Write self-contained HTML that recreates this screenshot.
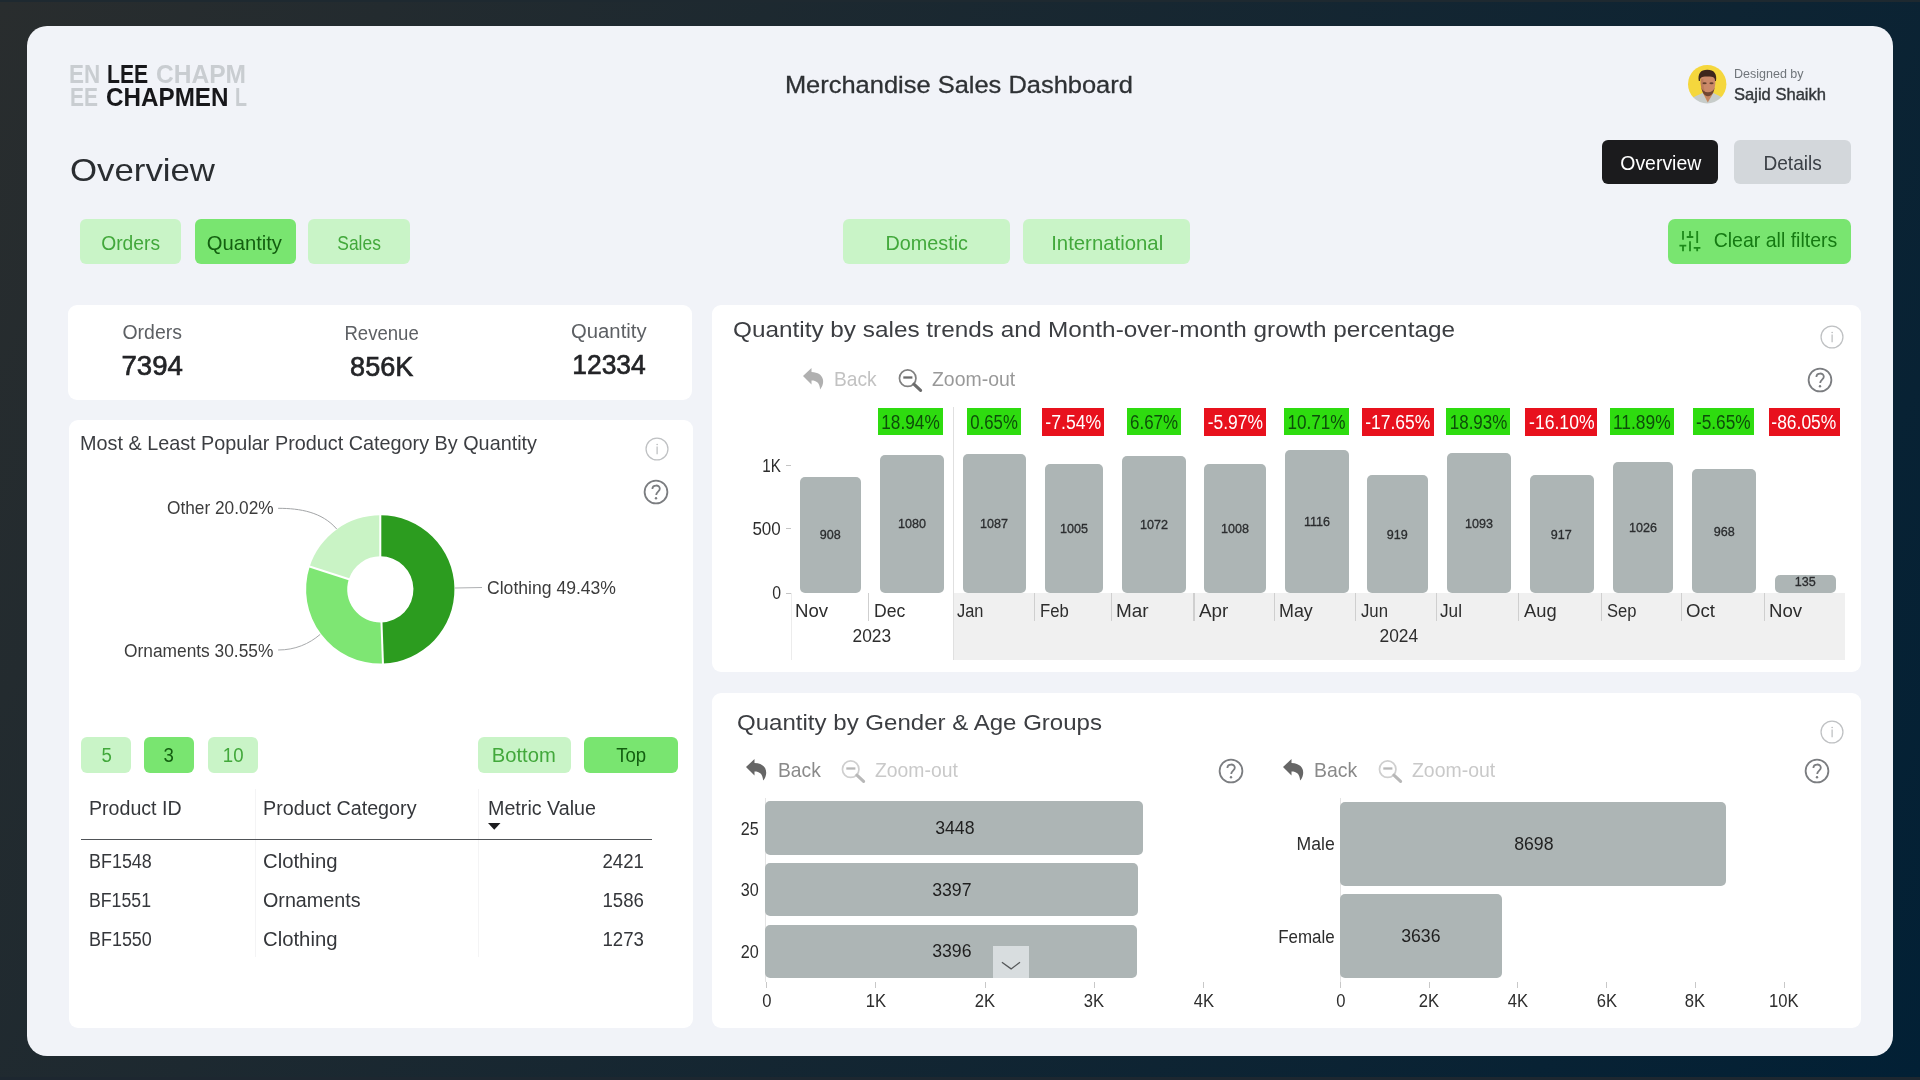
<!DOCTYPE html>
<html lang="en">
<head>
<meta charset="utf-8">
<title>Merchandise Sales Dashboard</title>
<style>
html,body{margin:0;padding:0;}
body{width:1920px;height:1080px;overflow:hidden;position:relative;font-family:"Liberation Sans",sans-serif;
  background:linear-gradient(118.9deg,rgb(41,45,46) 0%,rgb(2,32,53) 100%);}
.a{position:absolute;}
.t{position:absolute;white-space:pre;line-height:1;font-family:"Liberation Sans",sans-serif;}
#panel{left:27px;top:25.5px;width:1866px;height:1030.1px;border-radius:20px;background:#f1f3f8;}
.card{background:#fff;border-radius:9px;}
.chip{border-radius:6px;background:#c9f4c7;}
.chip.on{background:#79e570;}
.bar{background:#adb5b5;border-radius:5px;}
.pg{background:#2edc0f;}
.pr{background:#e8111d;}
.sep{background:#d2d2d2;width:1px;}
svg{position:absolute;overflow:visible;}
</style>
</head>
<body>
<div class="a" style="left:0;top:0;width:1920px;height:2.4px;background:#1e2930;"></div>
<div class="a" style="left:0;top:1077.2px;width:1920px;height:2.8px;background:#1d2730;"></div>
<div id="panel" class="a"></div>

<!-- header buttons -->
<div class="a" style="left:1602px;top:139.5px;width:116px;height:44.5px;border-radius:6px;background:#1b1b1d;"></div>
<div class="a" style="left:1734.3px;top:139.5px;width:116.5px;height:44.5px;border-radius:6px;background:#d3d7db;"></div>

<!-- avatar -->
<svg style="left:1687.8px;top:65.3px;" width="38.4" height="38.4" viewBox="0 0 38.4 38.4">
  <defs><clipPath id="av"><circle cx="19.2" cy="19.2" r="19.2"/></clipPath>
  <filter id="avb" x="-10%" y="-10%" width="120%" height="120%"><feGaussianBlur stdDeviation="0.65"/></filter></defs>
  <g clip-path="url(#av)"><g filter="url(#avb)">
    <rect x="-3" y="-3" width="45" height="45" fill="#f5d73e"/>
    <path d="M0 35 C6 31.5 11.5 29.8 15 27.8 L19.6 36.8 L25 27.8 C28.5 29.8 33 31.5 39 35 V42 H0 Z" fill="#c7ccca"/>
    <path d="M15 24 V28 L19.8 37.6 L25.2 28 V24 Z" fill="#c58562"/>
    <path d="M12.6 11 C12.4 20 13 24 15.5 28 C17.5 31.3 22.5 31.3 24.5 28 C27 24 27.6 20 27.4 11 Z" fill="#cb8969"/>
    <path d="M12.6 14 C12.4 20 13 24 15.5 28 C16.3 29.4 17.6 30.3 19 30.6 C16 27 15.2 20 15.4 14 Z" fill="#b3714f" opacity=".55"/>
    <path d="M13.4 22.5 C14 27.6 16.5 31.2 20 31.2 C23.5 31.2 26 27.6 26.6 22.5 C25.6 25.8 23.4 27.2 20 27.2 C16.6 27.2 14.4 25.8 13.4 22.5 Z" fill="#5a3627" opacity=".8"/>
    <path d="M10.8 16 C9.6 8.6 12.5 4.7 19.3 4.7 C26 4.7 29.2 8.6 28 16 L27 16 C27.2 12.8 25.5 11.4 19.4 11.5 C13.5 11.4 11.8 12.8 12 16 Z" fill="#3d261b"/>
    <ellipse cx="16.6" cy="18.2" rx="2.1" ry="1" fill="#42271b" opacity=".75"/>
    <ellipse cx="23.5" cy="18.2" rx="2.1" ry="1" fill="#42271b" opacity=".75"/>
  </g></g>
</svg>

<!-- filter chips -->
<div class="a chip" style="left:80px;top:219px;width:101px;height:45px;"></div>
<div class="a chip on" style="left:195px;top:219px;width:101px;height:45px;"></div>
<div class="a chip" style="left:308px;top:219px;width:102px;height:45px;"></div>
<div class="a chip" style="left:843px;top:219px;width:167px;height:45px;"></div>
<div class="a chip" style="left:1023px;top:219px;width:167px;height:45px;"></div>
<div class="a chip on" style="left:1668px;top:219px;width:183px;height:45px;border-radius:7px;"></div>
<!-- sliders icon -->
<svg style="left:1679px;top:230px;" width="23" height="23" viewBox="0 0 23 23" fill="none" stroke="#1d8a1a" stroke-width="1.8">
  <path d="M4 1 V9.8 M4 15.7 V21.3 M0.4 15.7 H7.3"/>
  <path d="M11 1 V7 M7.7 7 H14.3 M11 11.3 V21.3"/>
  <path d="M18.2 1 V13.1 M14.7 17.9 H21.4 M18.2 17.9 V21.3"/>
</svg>

<!-- cards -->
<div class="a card" style="left:68.3px;top:305px;width:623.7px;height:95px;"></div>
<div class="a card" style="left:69.3px;top:420.4px;width:623.7px;height:607.2px;"></div>
<div class="a card" style="left:712.3px;top:305px;width:1148.5px;height:367.3px;"></div>
<div class="a card" style="left:712.3px;top:693.3px;width:1148.5px;height:334.3px;"></div>

<svg style="left:0;top:0;" width="1920" height="1080"><path d="M380.30 515.20 A74.2 74.2 0 0 1 382.96 663.55 L381.49 622.48 A33.1 33.1 0 0 0 380.30 556.30 Z" fill="#2c9c1f"/><path d="M382.96 663.55 A74.2 74.2 0 0 1 309.70 566.56 L348.81 579.21 A33.1 33.1 0 0 0 381.49 622.48 Z" fill="#7ee673"/><path d="M309.70 566.56 A74.2 74.2 0 0 1 380.30 515.20 L380.30 556.30 A33.1 33.1 0 0 0 348.81 579.21 Z" fill="#c9f3c5"/><path d="M380.30 557.30 L380.30 514.20" stroke="#fff" stroke-width="2"/><path d="M381.45 621.48 L382.99 664.55" stroke="#fff" stroke-width="2"/><path d="M349.76 579.52 L308.75 566.25" stroke="#fff" stroke-width="2"/><path d="M278.1 508.3 C300 508.3 322 512 336.7 529" fill="none" stroke="#a2a4a6" stroke-width="1"/><path d="M455 588 L482 587.5" fill="none" stroke="#aeb0b2" stroke-width="1"/><path d="M278.1 650 C295 650 309 644 320.2 634.4" fill="none" stroke="#a8aaac" stroke-width="1"/></svg>
<div class="a chip" style="left:81.0px;top:737.0px;width:50.4px;height:36.0px;"></div>
<div class="a chip on" style="left:143.8px;top:737.0px;width:50.4px;height:36.0px;"></div>
<div class="a chip" style="left:208.0px;top:737.0px;width:50.2px;height:36.0px;"></div>
<div class="a chip" style="left:477.5px;top:737.0px;width:93.3px;height:36.0px;"></div>
<div class="a chip on" style="left:584.2px;top:737.0px;width:93.4px;height:36.0px;"></div>
<svg style="left:487.5px;top:822.5px;" width="13" height="7"><path d="M0 0 H12.5 L6.25 6.7 Z" fill="#1d1d1f"/></svg>
<div class="a " style="left:255.0px;top:789.0px;width:1.0px;height:168.0px;background:#f4f4f5;"></div>
<div class="a " style="left:478.0px;top:789.0px;width:1.0px;height:168.0px;background:#f4f4f5;"></div>
<div class="a " style="left:81.2px;top:838.5px;width:571.3px;height:1.6px;background:#505357;"></div>
<div class="a " style="left:786.3px;top:464.9px;width:4.7px;height:1.0px;background:#c4c4c4;"></div>
<div class="a " style="left:786.3px;top:528.2px;width:4.7px;height:1.0px;background:#c4c4c4;"></div>
<div class="a " style="left:786.3px;top:592.5px;width:4.7px;height:1.0px;background:#c4c4c4;"></div>
<div class="a " style="left:953.3px;top:592.7px;width:891.3px;height:67.3px;background:#f0f0f0;"></div>
<div class="a " style="left:791.2px;top:593.0px;width:1.0px;height:67.0px;background:#ececec;"></div>
<div class="a " style="left:953.0px;top:407.0px;width:1.0px;height:253.0px;background:#e0e0e0;"></div>
<div class="a bar" style="left:800.2px;top:476.6px;width:61.0px;height:116.1px;"></div>
<div class="a bar" style="left:880.0px;top:454.6px;width:63.8px;height:138.1px;"></div>
<div class="a pg" style="left:878.4px;top:407.6px;width:65.0px;height:27.6px;"></div>
<div class="a bar" style="left:962.6px;top:453.7px;width:63.8px;height:139.0px;"></div>
<div class="a pg" style="left:967.0px;top:407.6px;width:54.0px;height:27.6px;"></div>
<div class="a bar" style="left:1044.9px;top:464.2px;width:58.4px;height:128.5px;"></div>
<div class="a pr" style="left:1041.9px;top:407.6px;width:62.4px;height:28.0px;"></div>
<div class="a bar" style="left:1122.1px;top:455.6px;width:64.0px;height:137.1px;"></div>
<div class="a pg" style="left:1126.5px;top:407.6px;width:54.5px;height:27.6px;"></div>
<div class="a bar" style="left:1204.4px;top:463.8px;width:61.8px;height:128.9px;"></div>
<div class="a pr" style="left:1204.4px;top:407.6px;width:61.8px;height:28.0px;"></div>
<div class="a bar" style="left:1284.6px;top:450.0px;width:64.0px;height:142.7px;"></div>
<div class="a pg" style="left:1284.0px;top:407.6px;width:64.6px;height:27.6px;"></div>
<div class="a bar" style="left:1366.8px;top:475.2px;width:61.5px;height:117.5px;"></div>
<div class="a pr" style="left:1361.9px;top:407.6px;width:71.7px;height:28.0px;"></div>
<div class="a bar" style="left:1447.1px;top:452.9px;width:64.0px;height:139.8px;"></div>
<div class="a pg" style="left:1446.1px;top:407.6px;width:64.0px;height:27.6px;"></div>
<div class="a bar" style="left:1529.7px;top:475.4px;width:64.0px;height:117.3px;"></div>
<div class="a pr" style="left:1525.4px;top:407.6px;width:71.9px;height:28.0px;"></div>
<div class="a bar" style="left:1612.5px;top:461.5px;width:60.8px;height:131.2px;"></div>
<div class="a pg" style="left:1610.0px;top:407.6px;width:64.3px;height:27.6px;"></div>
<div class="a bar" style="left:1692.3px;top:468.9px;width:63.6px;height:123.8px;"></div>
<div class="a pg" style="left:1693.0px;top:407.6px;width:61.3px;height:27.6px;"></div>
<div class="a bar" style="left:1774.7px;top:575.4px;width:61.2px;height:17.3px;"></div>
<div class="a pr" style="left:1768.5px;top:407.6px;width:71.4px;height:28.0px;"></div>
<div class="a " style="left:868.3px;top:593.0px;width:1.2px;height:28.0px;background:#cfcfcf;"></div>
<div class="a " style="left:1033.8px;top:593.0px;width:1.2px;height:28.0px;background:#cfcfcf;"></div>
<div class="a " style="left:1111.2px;top:593.0px;width:1.2px;height:28.0px;background:#cfcfcf;"></div>
<div class="a " style="left:1193.4px;top:593.0px;width:1.2px;height:28.0px;background:#cfcfcf;"></div>
<div class="a " style="left:1273.5px;top:593.0px;width:1.2px;height:28.0px;background:#cfcfcf;"></div>
<div class="a " style="left:1355.3px;top:593.0px;width:1.2px;height:28.0px;background:#cfcfcf;"></div>
<div class="a " style="left:1436.3px;top:593.0px;width:1.2px;height:28.0px;background:#cfcfcf;"></div>
<div class="a " style="left:1517.9px;top:593.0px;width:1.2px;height:28.0px;background:#cfcfcf;"></div>
<div class="a " style="left:1600.9px;top:593.0px;width:1.2px;height:28.0px;background:#cfcfcf;"></div>
<div class="a " style="left:1680.6px;top:593.0px;width:1.2px;height:28.0px;background:#cfcfcf;"></div>
<div class="a " style="left:1763.9px;top:593.0px;width:1.2px;height:28.0px;background:#cfcfcf;"></div>
<div class="a " style="left:765.0px;top:798.0px;width:1.0px;height:184.0px;background:#e4e4e4;"></div>
<div class="a bar" style="left:765.3px;top:801.2px;width:377.9px;height:53.8px;"></div>
<div class="a bar" style="left:765.3px;top:863.2px;width:372.3px;height:53.2px;"></div>
<div class="a bar" style="left:765.3px;top:924.8px;width:372.2px;height:53.2px;"></div>
<div class="a " style="left:766.0px;top:982.0px;width:1.0px;height:5.5px;background:#c8c8c8;"></div>
<div class="a " style="left:875.3px;top:982.0px;width:1.0px;height:5.5px;background:#c8c8c8;"></div>
<div class="a " style="left:984.6px;top:982.0px;width:1.0px;height:5.5px;background:#c8c8c8;"></div>
<div class="a " style="left:1093.9px;top:982.0px;width:1.0px;height:5.5px;background:#c8c8c8;"></div>
<div class="a " style="left:1203.2px;top:982.0px;width:1.0px;height:5.5px;background:#c8c8c8;"></div>
<div class="a " style="left:993.0px;top:945.8px;width:36.0px;height:32.1px;background:#d8dddf;"></div>
<svg style="left:1001px;top:961px;" width="20" height="9"><path d="M0.9 1.2 L10.1 7.9 L19 1.2" fill="none" stroke="#55585a" stroke-width="1.3"/></svg>
<div class="a " style="left:1339.7px;top:798.0px;width:1.0px;height:184.0px;background:#e4e4e4;"></div>
<div class="a bar" style="left:1340px;top:801.5px;width:386.3px;height:84.1px;"></div>
<div class="a bar" style="left:1340px;top:894px;width:161.8px;height:84.1px;"></div>
<div class="a " style="left:1340.0px;top:982.0px;width:1.0px;height:5.5px;background:#c8c8c8;"></div>
<div class="a " style="left:1428.7px;top:982.0px;width:1.0px;height:5.5px;background:#c8c8c8;"></div>
<div class="a " style="left:1517.4px;top:982.0px;width:1.0px;height:5.5px;background:#c8c8c8;"></div>
<div class="a " style="left:1606.1px;top:982.0px;width:1.0px;height:5.5px;background:#c8c8c8;"></div>
<div class="a " style="left:1694.8px;top:982.0px;width:1.0px;height:5.5px;background:#c8c8c8;"></div>
<div class="a " style="left:1783.5px;top:982.0px;width:1.0px;height:5.5px;background:#c8c8c8;"></div>
<svg style="left:643.6px;top:435.7px;" width="26" height="26" viewBox="-13 -13 26 26"><circle r="10.95" fill="none" stroke="#bfc1c3" stroke-width="1.25"/><path d="M0.1 -2.4 V5.3" stroke="#b4b6b8" stroke-width="1.1"/><circle cx="0.1" cy="-4.6" r=".75" fill="#b4b6b8"/></svg>
<svg style="left:642.6px;top:478.9px;" width="26" height="26" viewBox="-13 -13 26 26"><circle r="11.4" fill="none" stroke="#7b7d80" stroke-width="1.8"/><path d="M-3.6 -3 C-3.6 -7.6 3.8 -7.6 3.8 -3.2 C3.8 -0.4 0.2 -0.3 0.2 3" fill="none" stroke="#7b7d80" stroke-width="1.8"/><circle cy="6.2" r="1.2" fill="#7b7d80"/></svg>
<svg style="left:1819.2px;top:324px;" width="26" height="26" viewBox="-13 -13 26 26"><circle r="10.95" fill="none" stroke="#bfc1c3" stroke-width="1.25"/><path d="M0.1 -2.4 V5.3" stroke="#b4b6b8" stroke-width="1.1"/><circle cx="0.1" cy="-4.6" r=".75" fill="#b4b6b8"/></svg>
<svg style="left:1807.3px;top:367.2px;" width="26" height="26" viewBox="-13 -13 26 26"><circle r="11.4" fill="none" stroke="#7b7d80" stroke-width="1.8"/><path d="M-3.6 -3 C-3.6 -7.6 3.8 -7.6 3.8 -3.2 C3.8 -0.4 0.2 -0.3 0.2 3" fill="none" stroke="#7b7d80" stroke-width="1.8"/><circle cy="6.2" r="1.2" fill="#7b7d80"/></svg>
<svg style="left:1819.2px;top:718.9px;" width="26" height="26" viewBox="-13 -13 26 26"><circle r="10.95" fill="none" stroke="#bfc1c3" stroke-width="1.25"/><path d="M0.1 -2.4 V5.3" stroke="#b4b6b8" stroke-width="1.1"/><circle cx="0.1" cy="-4.6" r=".75" fill="#b4b6b8"/></svg>
<svg style="left:1217.7px;top:757.7px;" width="26" height="26" viewBox="-13 -13 26 26"><circle r="11.4" fill="none" stroke="#7b7d80" stroke-width="1.8"/><path d="M-3.6 -3 C-3.6 -7.6 3.8 -7.6 3.8 -3.2 C3.8 -0.4 0.2 -0.3 0.2 3" fill="none" stroke="#7b7d80" stroke-width="1.8"/><circle cy="6.2" r="1.2" fill="#7b7d80"/></svg>
<svg style="left:1804px;top:757.7px;" width="26" height="26" viewBox="-13 -13 26 26"><circle r="11.4" fill="none" stroke="#7b7d80" stroke-width="1.8"/><path d="M-3.6 -3 C-3.6 -7.6 3.8 -7.6 3.8 -3.2 C3.8 -0.4 0.2 -0.3 0.2 3" fill="none" stroke="#7b7d80" stroke-width="1.8"/><circle cy="6.2" r="1.2" fill="#7b7d80"/></svg>
<svg style="left:803px;top:368.4px;" width="22" height="23" viewBox="0 0 22 23"><path d="M8.5 0 L0 8.1 L8.5 16.5 V12.5 C13.6 12.5 16.8 15 17.1 21.6 C22.4 15.6 21.8 4.6 8.5 4.1 Z" fill="#b0b0b0"/></svg>
<svg style="left:898px;top:369px;" width="25" height="25" viewBox="0 0 25 25"><circle cx="9.7" cy="9.2" r="8.25" fill="none" stroke="#808080" stroke-width="1.7"/><path d="M5.3 8.5 H14.4" stroke="#6c6c6c" stroke-width="2.3"/><path d="M15.9 15.1 L22.6 21.4" stroke="#6c6c6c" stroke-width="3.1" stroke-linecap="round"/></svg>
<svg style="left:746px;top:758.6px;" width="22" height="23" viewBox="0 0 22 23"><path d="M8.5 0 L0 8.1 L8.5 16.5 V12.5 C13.6 12.5 16.8 15 17.1 21.6 C22.4 15.6 21.8 4.6 8.5 4.1 Z" fill="#666666"/></svg>
<svg style="left:841.2px;top:760px;" width="25" height="25" viewBox="0 0 25 25"><circle cx="9.7" cy="9.2" r="8.25" fill="none" stroke="#cfcfcf" stroke-width="1.7"/><path d="M5.3 8.5 H14.4" stroke="#b8b8b8" stroke-width="2.3"/><path d="M15.9 15.1 L22.6 21.4" stroke="#b8b8b8" stroke-width="3.1" stroke-linecap="round"/></svg>
<svg style="left:1283px;top:758.6px;" width="22" height="23" viewBox="0 0 22 23"><path d="M8.5 0 L0 8.1 L8.5 16.5 V12.5 C13.6 12.5 16.8 15 17.1 21.6 C22.4 15.6 21.8 4.6 8.5 4.1 Z" fill="#666666"/></svg>
<svg style="left:1378px;top:760px;" width="25" height="25" viewBox="0 0 25 25"><circle cx="9.7" cy="9.2" r="8.25" fill="none" stroke="#cfcfcf" stroke-width="1.7"/><path d="M5.3 8.5 H14.4" stroke="#b8b8b8" stroke-width="2.3"/><path d="M15.9 15.1 L22.6 21.4" stroke="#b8b8b8" stroke-width="3.1" stroke-linecap="round"/></svg>

<span class="t" style="left:69.40px;top:63px;font-size:24.85px;color:#c9cdd1;font-weight:700;transform:scaleX(0.9039);transform-origin:left center;">EN</span>
<span class="t" style="left:107.20px;top:63px;font-size:24.85px;color:#17171a;font-weight:700;transform:scaleX(0.8525);transform-origin:left center;">LEE</span>
<span class="t" style="left:155.90px;top:63px;font-size:24.85px;color:#c9cdd1;font-weight:700;transform:scaleX(0.9880);transform-origin:left center;">CHAPM</span>
<span class="t" style="left:70.20px;top:86px;font-size:24.85px;color:#c9cdd1;font-weight:700;transform:scaleX(0.8445);transform-origin:left center;">EE</span>
<span class="t" style="left:105.90px;top:86px;font-size:24.85px;color:#17171a;font-weight:700;transform:scaleX(0.9752);transform-origin:left center;">CHAPMEN</span>
<span class="t" style="left:235.20px;top:86px;font-size:24.85px;color:#c9cdd1;font-weight:700;transform:scaleX(0.7901);transform-origin:left center;">L</span>
<span class="t" style="left:790.09px;top:73px;font-size:24.71px;color:#2e3134;-webkit-text-stroke:0.30px #2e3134;transform:scaleX(1.0302);transform-origin:center center;">Merchandise Sales Dashboard</span>
<span class="t" style="left:1734.40px;top:68px;font-size:12.94px;color:#70757a;transform:scaleX(0.9677);transform-origin:left center;">Designed by</span>
<span class="t" style="left:1734.40px;top:86px;font-size:17.15px;color:#33373b;-webkit-text-stroke:0.41px #33373b;transform:scaleX(0.9654);transform-origin:left center;">Sajid Shaikh</span>
<span class="t" style="left:70.00px;top:156px;font-size:30.96px;color:#2a2d31;transform:scaleX(1.1240);transform-origin:left center;">Overview</span>
<span class="t" style="left:1618.53px;top:153px;font-size:20.06px;color:#ffffff;transform:scaleX(0.9695);transform-origin:center center;">Overview</span>
<span class="t" style="left:1761.86px;top:153px;font-size:20.06px;color:#3b4046;transform:scaleX(0.9530);transform-origin:center center;">Details</span>
<span class="t" style="left:99.96px;top:233px;font-size:20.06px;color:#42a83b;transform:scaleX(0.9595);transform-origin:center center;">Orders</span>
<span class="t" style="left:207.26px;top:233px;font-size:20.06px;color:#135f10;transform:scaleX(1.0084);transform-origin:center center;">Quantity</span>
<span class="t" style="left:333.72px;top:233px;font-size:20.06px;color:#42a83b;transform:scaleX(0.8693);transform-origin:center center;">Sales</span>
<span class="t" style="left:884.93px;top:233px;font-size:20.06px;color:#42a83b;transform:scaleX(0.9875);transform-origin:center center;">Domestic</span>
<span class="t" style="left:1051.53px;top:233px;font-size:20.06px;color:#42a83b;transform:scaleX(1.0150);transform-origin:center center;">International</span>
<span class="t" style="left:1711.90px;top:230px;font-size:20.06px;color:#157a12;transform:scaleX(0.9740);transform-origin:center center;">Clear all filters</span>
<span class="t" style="left:121.99px;top:323px;font-size:19.77px;color:#5d6064;transform:scaleX(0.9847);transform-origin:center center;">Orders</span>
<span class="t" style="left:121.30px;top:352px;font-size:28.05px;color:#232427;-webkit-text-stroke:0.67px #232427;transform:scaleX(0.9839);transform-origin:center center;">7394</span>
<span class="t" style="left:341.84px;top:324px;font-size:19.77px;color:#5d6064;transform:scaleX(0.9390);transform-origin:center center;">Revenue</span>
<span class="t" style="left:348.64px;top:353px;font-size:28.05px;color:#232427;-webkit-text-stroke:0.67px #232427;transform:scaleX(0.9662);transform-origin:center center;">856K</span>
<span class="t" style="left:572.19px;top:322px;font-size:19.77px;color:#5d6064;transform:scaleX(1.0255);transform-origin:center center;">Quantity</span>
<span class="t" style="left:570.00px;top:351px;font-size:28.05px;color:#232427;-webkit-text-stroke:0.67px #232427;transform:scaleX(0.9423);transform-origin:center center;">12334</span>
<span class="t" style="left:80.20px;top:434px;font-size:19.48px;color:#3c3e42;transform:scaleX(1.0176);transform-origin:left center;">Most &amp; Least Popular Product Category By Quantity</span>
<span class="t" style="left:167.20px;top:500px;font-size:17.88px;color:#3c3c3c;transform:scaleX(0.9673);transform-origin:left center;">Other 20.02%</span>
<span class="t" style="left:486.60px;top:580px;font-size:17.88px;color:#3c3c3c;transform:scaleX(0.9843);transform-origin:left center;">Clothing 49.43%</span>
<span class="t" style="left:124.40px;top:643px;font-size:17.88px;color:#3c3c3c;transform:scaleX(0.9709);transform-origin:left center;">Ornaments 30.55%</span>
<span class="t" style="left:100.62px;top:745px;font-size:20.06px;color:#42a83b;transform:scaleX(0.9300);transform-origin:center center;">5</span>
<span class="t" style="left:163.42px;top:745px;font-size:20.06px;color:#135f10;transform:scaleX(0.9300);transform-origin:center center;">3</span>
<span class="t" style="left:221.84px;top:745px;font-size:20.06px;color:#42a83b;transform:scaleX(0.9300);transform-origin:center center;">10</span>
<span class="t" style="left:492.24px;top:745px;font-size:20.06px;color:#42a83b;transform:scaleX(1.0076);transform-origin:center center;">Bottom</span>
<span class="t" style="left:614.64px;top:745px;font-size:20.06px;color:#135f10;transform:scaleX(0.9280);transform-origin:center center;">Top</span>
<span class="t" style="left:89.30px;top:799px;font-size:19.33px;color:#35373b;transform:scaleX(1.0141);transform-origin:left center;">Product ID</span>
<span class="t" style="left:263.10px;top:799px;font-size:19.33px;color:#35373b;transform:scaleX(1.0205);transform-origin:left center;">Product Category</span>
<span class="t" style="left:487.50px;top:799px;font-size:19.33px;color:#35373b;transform:scaleX(1.0190);transform-origin:left center;">Metric Value</span>
<span class="t" style="left:89.30px;top:852px;font-size:19.33px;color:#35373b;transform:scaleX(0.9276);transform-origin:left center;">BF1548</span>
<span class="t" style="left:263.10px;top:852px;font-size:19.33px;color:#35373b;transform:scaleX(1.0505);transform-origin:left center;">Clothing</span>
<span class="t" style="left:600.50px;top:852px;font-size:19.33px;color:#35373b;transform:scaleX(0.9651);transform-origin:right center;">2421</span>
<span class="t" style="left:89.30px;top:891px;font-size:19.33px;color:#35373b;transform:scaleX(0.9158);transform-origin:left center;">BF1551</span>
<span class="t" style="left:263.10px;top:891px;font-size:19.33px;color:#35373b;transform:scaleX(1.0198);transform-origin:left center;">Ornaments</span>
<span class="t" style="left:600.50px;top:891px;font-size:19.33px;color:#35373b;transform:scaleX(0.9651);transform-origin:right center;">1586</span>
<span class="t" style="left:89.30px;top:930px;font-size:19.33px;color:#35373b;transform:scaleX(0.9276);transform-origin:left center;">BF1550</span>
<span class="t" style="left:263.10px;top:930px;font-size:19.33px;color:#35373b;transform:scaleX(1.0505);transform-origin:left center;">Clothing</span>
<span class="t" style="left:600.50px;top:930px;font-size:19.33px;color:#35373b;transform:scaleX(0.9651);transform-origin:right center;">1273</span>
<span class="t" style="left:733.40px;top:318px;font-size:22.67px;color:#3c3e42;transform:scaleX(1.0736);transform-origin:left center;">Quantity by sales trends and Month-over-month growth percentage</span>
<span class="t" style="left:834.40px;top:369px;font-size:20.78px;color:#c2c2c2;transform:scaleX(0.9226);transform-origin:left center;">Back</span>
<span class="t" style="left:931.50px;top:369px;font-size:20.78px;color:#999999;transform:scaleX(0.9361);transform-origin:left center;">Zoom-out</span>
<span class="t" style="left:759.34px;top:458px;font-size:17.88px;color:#2d2d2d;transform:scaleX(0.8509);transform-origin:right center;">1K</span>
<span class="t" style="left:751.39px;top:521px;font-size:17.88px;color:#2d2d2d;transform:scaleX(0.9526);transform-origin:right center;">500</span>
<span class="t" style="left:771.26px;top:585px;font-size:17.88px;color:#2d2d2d;transform:scaleX(0.8855);transform-origin:right center;">0</span>
<span class="t" style="left:819.42px;top:528px;font-size:13.52px;color:#2b2d2f;-webkit-text-stroke:0.32px #2b2d2f;transform:scaleX(0.9300);transform-origin:center center;">908</span>
<span class="t" style="left:794.90px;top:602px;font-size:18.02px;color:#2d2d2d;transform:scaleX(1.0329);transform-origin:left center;">Nov</span>
<span class="t" style="left:896.86px;top:517px;font-size:13.52px;color:#2b2d2f;-webkit-text-stroke:0.32px #2b2d2f;transform:scaleX(0.9300);transform-origin:center center;">1080</span>
<span class="t" style="left:873.90px;top:602px;font-size:18.02px;color:#2d2d2d;transform:scaleX(0.9767);transform-origin:left center;">Dec</span>
<span class="t" style="left:877.38px;top:413px;font-size:19.77px;color:#0d4d0a;transform:scaleX(0.8725);transform-origin:center center;">18.94%</span>
<span class="t" style="left:979.46px;top:517px;font-size:13.52px;color:#2b2d2f;-webkit-text-stroke:0.32px #2b2d2f;transform:scaleX(0.9300);transform-origin:center center;">1087</span>
<span class="t" style="left:956.80px;top:602px;font-size:18.02px;color:#2d2d2d;transform:scaleX(0.9089);transform-origin:left center;">Jan</span>
<span class="t" style="left:965.98px;top:413px;font-size:19.77px;color:#0d4d0a;transform:scaleX(0.8475);transform-origin:center center;">0.65%</span>
<span class="t" style="left:1059.06px;top:522px;font-size:13.52px;color:#2b2d2f;-webkit-text-stroke:0.32px #2b2d2f;transform:scaleX(0.9300);transform-origin:center center;">1005</span>
<span class="t" style="left:1039.90px;top:602px;font-size:18.02px;color:#2d2d2d;transform:scaleX(0.9276);transform-origin:left center;">Feb</span>
<span class="t" style="left:1041.78px;top:413px;font-size:19.77px;color:#fff;transform:scaleX(0.8924);transform-origin:center center;">-7.54%</span>
<span class="t" style="left:1139.06px;top:518px;font-size:13.52px;color:#2b2d2f;-webkit-text-stroke:0.32px #2b2d2f;transform:scaleX(0.9300);transform-origin:center center;">1072</span>
<span class="t" style="left:1116.40px;top:602px;font-size:18.02px;color:#2d2d2d;transform:scaleX(1.0506);transform-origin:left center;">Mar</span>
<span class="t" style="left:1125.73px;top:413px;font-size:19.77px;color:#0d4d0a;transform:scaleX(0.8564);transform-origin:center center;">6.67%</span>
<span class="t" style="left:1220.26px;top:522px;font-size:13.52px;color:#2b2d2f;-webkit-text-stroke:0.32px #2b2d2f;transform:scaleX(0.9300);transform-origin:center center;">1008</span>
<span class="t" style="left:1198.80px;top:602px;font-size:18.02px;color:#2d2d2d;transform:scaleX(1.0482);transform-origin:left center;">Apr</span>
<span class="t" style="left:1203.98px;top:413px;font-size:19.77px;color:#fff;transform:scaleX(0.8828);transform-origin:center center;">-5.97%</span>
<span class="t" style="left:1302.57px;top:515px;font-size:13.52px;color:#2b2d2f;-webkit-text-stroke:0.32px #2b2d2f;transform:scaleX(0.9300);transform-origin:center center;">1116</span>
<span class="t" style="left:1279.10px;top:602px;font-size:18.02px;color:#2d2d2d;transform:scaleX(0.9927);transform-origin:left center;">May</span>
<span class="t" style="left:1282.78px;top:413px;font-size:19.77px;color:#0d4d0a;transform:scaleX(0.8666);transform-origin:center center;">10.71%</span>
<span class="t" style="left:1386.27px;top:528px;font-size:13.52px;color:#2b2d2f;-webkit-text-stroke:0.32px #2b2d2f;transform:scaleX(0.9300);transform-origin:center center;">919</span>
<span class="t" style="left:1361.20px;top:602px;font-size:18.02px;color:#2d2d2d;transform:scaleX(0.9295);transform-origin:left center;">Jun</span>
<span class="t" style="left:1360.94px;top:413px;font-size:19.77px;color:#fff;transform:scaleX(0.8856);transform-origin:center center;">-17.65%</span>
<span class="t" style="left:1464.06px;top:517px;font-size:13.52px;color:#2b2d2f;-webkit-text-stroke:0.32px #2b2d2f;transform:scaleX(0.9300);transform-origin:center center;">1093</span>
<span class="t" style="left:1440.20px;top:602px;font-size:18.02px;color:#2d2d2d;transform:scaleX(0.9552);transform-origin:left center;">Jul</span>
<span class="t" style="left:1444.58px;top:413px;font-size:19.77px;color:#0d4d0a;transform:scaleX(0.8576);transform-origin:center center;">18.93%</span>
<span class="t" style="left:1550.42px;top:528px;font-size:13.52px;color:#2b2d2f;-webkit-text-stroke:0.32px #2b2d2f;transform:scaleX(0.9300);transform-origin:center center;">917</span>
<span class="t" style="left:1523.80px;top:602px;font-size:18.02px;color:#2d2d2d;transform:scaleX(1.0168);transform-origin:left center;">Aug</span>
<span class="t" style="left:1524.54px;top:413px;font-size:19.77px;color:#fff;transform:scaleX(0.8883);transform-origin:center center;">-16.10%</span>
<span class="t" style="left:1627.86px;top:521px;font-size:13.52px;color:#2b2d2f;-webkit-text-stroke:0.32px #2b2d2f;transform:scaleX(0.9300);transform-origin:center center;">1026</span>
<span class="t" style="left:1606.90px;top:602px;font-size:18.02px;color:#2d2d2d;transform:scaleX(0.9201);transform-origin:left center;">Sep</span>
<span class="t" style="left:1609.36px;top:413px;font-size:19.77px;color:#0d4d0a;transform:scaleX(0.8814);transform-origin:center center;">11.89%</span>
<span class="t" style="left:1712.82px;top:525px;font-size:13.52px;color:#2b2d2f;-webkit-text-stroke:0.32px #2b2d2f;transform:scaleX(0.9300);transform-origin:center center;">968</span>
<span class="t" style="left:1686.20px;top:602px;font-size:18.02px;color:#2d2d2d;transform:scaleX(1.0346);transform-origin:left center;">Oct</span>
<span class="t" style="left:1692.33px;top:413px;font-size:19.77px;color:#0d4d0a;transform:scaleX(0.8748);transform-origin:center center;">-5.65%</span>
<span class="t" style="left:1794.02px;top:575px;font-size:13.52px;color:#2b2d2f;-webkit-text-stroke:0.32px #2b2d2f;transform:scaleX(0.9300);transform-origin:center center;">135</span>
<span class="t" style="left:1769.40px;top:602px;font-size:18.02px;color:#2d2d2d;transform:scaleX(1.0329);transform-origin:left center;">Nov</span>
<span class="t" style="left:1767.39px;top:413px;font-size:19.77px;color:#fff;transform:scaleX(0.8815);transform-origin:center center;">-86.05%</span>
<span class="t" style="left:851.63px;top:628px;font-size:17.88px;color:#2d2d2d;transform:scaleX(0.9715);transform-origin:center center;">2023</span>
<span class="t" style="left:1379.33px;top:628px;font-size:17.88px;color:#2d2d2d;transform:scaleX(0.9715);transform-origin:center center;">2024</span>
<span class="t" style="left:736.70px;top:711px;font-size:22.97px;color:#3c3e42;transform:scaleX(1.0472);transform-origin:left center;">Quantity by Gender &amp; Age Groups</span>
<span class="t" style="left:777.80px;top:760px;font-size:20.78px;color:#8a8a8a;transform:scaleX(0.9270);transform-origin:left center;">Back</span>
<span class="t" style="left:874.90px;top:760px;font-size:20.78px;color:#c9c9c9;transform:scaleX(0.9316);transform-origin:left center;">Zoom-out</span>
<span class="t" style="left:1314.40px;top:760px;font-size:20.78px;color:#8a8a8a;transform:scaleX(0.9356);transform-origin:left center;">Back</span>
<span class="t" style="left:1411.90px;top:760px;font-size:20.78px;color:#c9c9c9;transform:scaleX(0.9361);transform-origin:left center;">Zoom-out</span>
<span class="t" style="left:739.12px;top:821px;font-size:17.88px;color:#2d2d2d;transform:scaleX(0.9057);transform-origin:right center;">25</span>
<span class="t" style="left:934.74px;top:820px;font-size:17.88px;color:#1f1f1f;transform:scaleX(0.9916);transform-origin:center center;">3448</span>
<span class="t" style="left:739.12px;top:882px;font-size:17.88px;color:#2d2d2d;transform:scaleX(0.9057);transform-origin:right center;">30</span>
<span class="t" style="left:931.95px;top:882px;font-size:17.88px;color:#1f1f1f;transform:scaleX(0.9916);transform-origin:center center;">3397</span>
<span class="t" style="left:739.12px;top:944px;font-size:17.88px;color:#2d2d2d;transform:scaleX(0.9057);transform-origin:right center;">20</span>
<span class="t" style="left:931.89px;top:943px;font-size:17.88px;color:#1f1f1f;transform:scaleX(0.9916);transform-origin:center center;">3396</span>
<span class="t" style="left:761.53px;top:993px;font-size:17.88px;color:#2d2d2d;transform:scaleX(0.9300);transform-origin:center center;">0</span>
<span class="t" style="left:864.87px;top:993px;font-size:17.88px;color:#2d2d2d;transform:scaleX(0.9300);transform-origin:center center;">1K</span>
<span class="t" style="left:974.17px;top:993px;font-size:17.88px;color:#2d2d2d;transform:scaleX(0.9300);transform-origin:center center;">2K</span>
<span class="t" style="left:1083.47px;top:993px;font-size:17.88px;color:#2d2d2d;transform:scaleX(0.9300);transform-origin:center center;">3K</span>
<span class="t" style="left:1192.77px;top:993px;font-size:17.88px;color:#2d2d2d;transform:scaleX(0.9300);transform-origin:center center;">4K</span>
<span class="t" style="left:1296.18px;top:836px;font-size:17.88px;color:#2d2d2d;transform:scaleX(0.9866);transform-origin:right center;">Male</span>
<span class="t" style="left:1513.55px;top:836px;font-size:17.88px;color:#1f1f1f;transform:scaleX(0.9916);transform-origin:center center;">8698</span>
<span class="t" style="left:1275.34px;top:929px;font-size:17.88px;color:#2d2d2d;transform:scaleX(0.9469);transform-origin:right center;">Female</span>
<span class="t" style="left:1401.28px;top:928px;font-size:17.88px;color:#1f1f1f;transform:scaleX(0.9916);transform-origin:center center;">3636</span>
<span class="t" style="left:1335.53px;top:993px;font-size:17.88px;color:#2d2d2d;transform:scaleX(0.9300);transform-origin:center center;">0</span>
<span class="t" style="left:1418.27px;top:993px;font-size:17.88px;color:#2d2d2d;transform:scaleX(0.9300);transform-origin:center center;">2K</span>
<span class="t" style="left:1506.97px;top:993px;font-size:17.88px;color:#2d2d2d;transform:scaleX(0.9300);transform-origin:center center;">4K</span>
<span class="t" style="left:1595.67px;top:993px;font-size:17.88px;color:#2d2d2d;transform:scaleX(0.9300);transform-origin:center center;">6K</span>
<span class="t" style="left:1684.37px;top:993px;font-size:17.88px;color:#2d2d2d;transform:scaleX(0.9300);transform-origin:center center;">8K</span>
<span class="t" style="left:1768.11px;top:993px;font-size:17.88px;color:#2d2d2d;transform:scaleX(0.9300);transform-origin:center center;">10K</span>
</body>
</html>
